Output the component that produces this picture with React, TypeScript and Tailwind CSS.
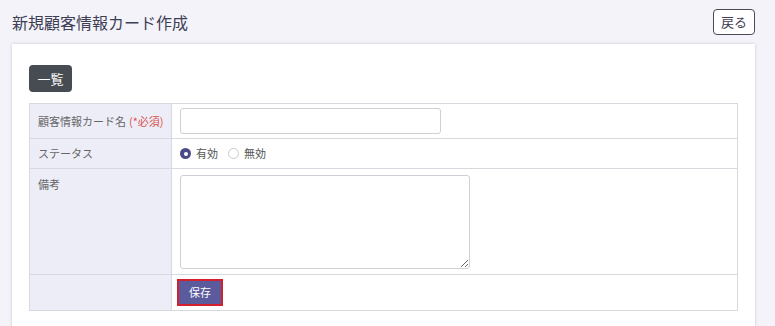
import React from "react";

export default function App() {
  const font = { fontFamily: '"Noto Sans CJK JP", "Noto Sans", sans-serif' };
  return (
    <div className="min-h-[326px] bg-[#f3f3f9] pl-3 pr-5 text-[#555]" style={font}>
      <div className="flex h-[44px] items-center justify-between">
        <h1 className="text-[16px] font-normal leading-none text-[#3e3e55]">新規顧客情報カード作成</h1>
        <button className="h-[26px] w-[42px] rounded-[4px] border border-[#4a4a55] bg-white text-[13px] text-[#3e3e55]">
          戻る
        </button>
      </div>
      <div className="bg-white px-[17px] pb-[16px] pt-[21px] shadow-[0_0_3px_rgba(0,0,0,0.18)]">
        <button className="mb-[11px] flex h-[27px] w-[43px] items-center justify-center rounded-[4px] bg-[#474c53] text-[13px] text-white">
          一覧
        </button>
        <div className="grid grid-cols-[142px_1fr] border border-[#d8d8df] text-[11px]">
          <div className="flex h-[35px] items-center whitespace-nowrap border-r border-b border-[#d8d8df] bg-[#ededf8] px-[8px] text-[#666]">
            顧客情報カード名<span className="ml-[3px] text-[#d9534f]">(*必須)</span>
          </div>
          <div className="flex h-[35px] items-center border-b border-[#d8d8df] px-[8px]">
            <input className="h-[26px] w-[261px] rounded-[3px] border border-[#cfcfd6] outline-none" />
          </div>

          <div className="flex h-[30px] items-center border-r border-b border-[#d8d8df] bg-[#ededf8] px-[8px] text-[#666]">
            ステータス
          </div>
          <div className="flex h-[30px] items-center border-b border-[#d8d8df] px-[8px] text-[#555]">
            <span className="flex items-center">
              <span className="mr-[5px] flex h-[11px] w-[11px] items-center justify-center rounded-full bg-[#4b4a88]">
                <span className="h-[4px] w-[4px] rounded-full bg-white" />
              </span>
              有効
            </span>
            <span className="ml-[10px] flex items-center">
              <span className="mr-[5px] h-[11px] w-[11px] rounded-full border border-[#c9c9cf] bg-white" />
              無効
            </span>
          </div>

          <div className="h-[106px] border-r border-b border-[#d8d8df] bg-[#ededf8] px-[8px] pt-[7px] text-[#666]">
            備考
          </div>
          <div className="h-[106px] border-b border-[#d8d8df] px-[8px] pt-[6px]">
            <textarea className="block h-[94px] w-[290px] rounded-[3px] border border-[#cfcfd6] outline-none" />
          </div>

          <div className="h-[35px] border-r border-[#d8d8df] bg-[#ededf8]" />
          <div className="flex h-[35px] items-center px-[5px]">
            <button className="flex h-[27px] w-[46px] items-center justify-center border-2 border-[#d41f2c] bg-[#5a5a9c] text-[11px] text-white">
              保存
            </button>
          </div>
        </div>
      </div>
    </div>
  );
}
